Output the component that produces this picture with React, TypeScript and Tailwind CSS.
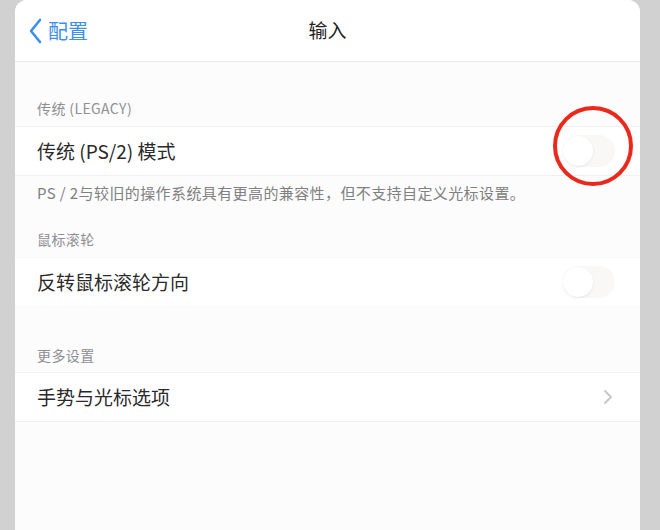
import React from "react"

const font = { fontFamily: '"Noto Sans CJK SC", "Noto Sans", sans-serif' }

function Toggle() {
    return (
        <div className="relative w-[52px] h-[32px] rounded-full bg-[#faf7f7]">
            <div className="absolute left-0 top-[1px] w-[30px] h-[30px] rounded-full bg-white shadow-[0_1px_3px_rgba(0,0,0,0.08)]" />
        </div>
    )
}

function SectionLabel({ text, className }: { text: string; className?: string }) {
    return (
        <div className={"px-[22px] text-[14px] tracking-[0.4px] leading-[20px] text-[#8e8e93] " + (className ?? "")}>
            {text}
        </div>
    )
}

function Row({ label, right, borders = "border-y border-[#efefef]" }: { label: string; right?: React.ReactNode; borders?: string }) {
    return (
        <div className={"h-[50px] bg-white flex items-center justify-between pl-[22px] pr-[25px] " + borders}>
            <span className="text-[19px] text-[#2a2a2a]">{label}</span>
            {right}
        </div>
    )
}

export default function App() {
    return (
        <div className="w-[660px] h-[530px] bg-[#d1d1d1] px-[15px] overflow-hidden" style={font}>
            <div className="relative w-[625px] h-[540px] bg-[#fcfcfc] rounded-t-[12px]">
                {/* nav bar */}
                <div className="h-[62px] bg-white rounded-t-[12px] border-b border-[#e8e8e8] flex items-center relative">
                    <div className="flex items-center pl-[13px] text-[#3d8ef0]">
                        <svg width="16" height="26" viewBox="0 0 16 26" className="mr-[4px]">
                            <path d="M12 2 L3 13 L12 24" fill="none" stroke="#3d8ef0" strokeWidth="2.6" strokeLinecap="round" strokeLinejoin="round" />
                        </svg>
                        <span className="text-[20px]">配置</span>
                    </div>
                    <div className="absolute left-0 right-0 text-center text-[19px] text-[#222] pointer-events-none">输入</div>
                </div>

                <SectionLabel text="传统 (LEGACY)" className="pt-[36px] pb-[8px]" />
                <Row label="传统 (PS/2) 模式" right={<Toggle />} />
                <div className="px-[22px] pt-[7px] text-[15px] tracking-[0.4px] leading-[20px] text-[#808080]">
                    PS / 2与较旧的操作系统具有更高的兼容性，但不支持自定义光标设置。
                </div>

                <SectionLabel text="鼠标滚轮" className="pt-[26px] pb-[8px]" />
                <Row label="反转鼠标滚轮方向" right={<Toggle />} borders="border-y border-[#f9f9f9]" />

                <SectionLabel text="更多设置" className="pt-[38px] pb-[7px]" />
                <Row
                    label="手势与光标选项"
                    right={
                        <svg width="10" height="16" viewBox="0 0 10 16" className="mr-[2px]">
                            <path d="M2 2 L8 8 L2 14" fill="none" stroke="#c7c7cc" strokeWidth="2" strokeLinecap="round" strokeLinejoin="round" />
                        </svg>
                    }
                />

                {/* red annotation circle */}
                <svg className="absolute left-[537px] top-[105px]" width="82" height="82" viewBox="0 0 82 82">
                    <circle cx="41" cy="41" r="38" fill="none" stroke="#e8291c" strokeWidth="4" />
                </svg>
            </div>
        </div>
    )
}
